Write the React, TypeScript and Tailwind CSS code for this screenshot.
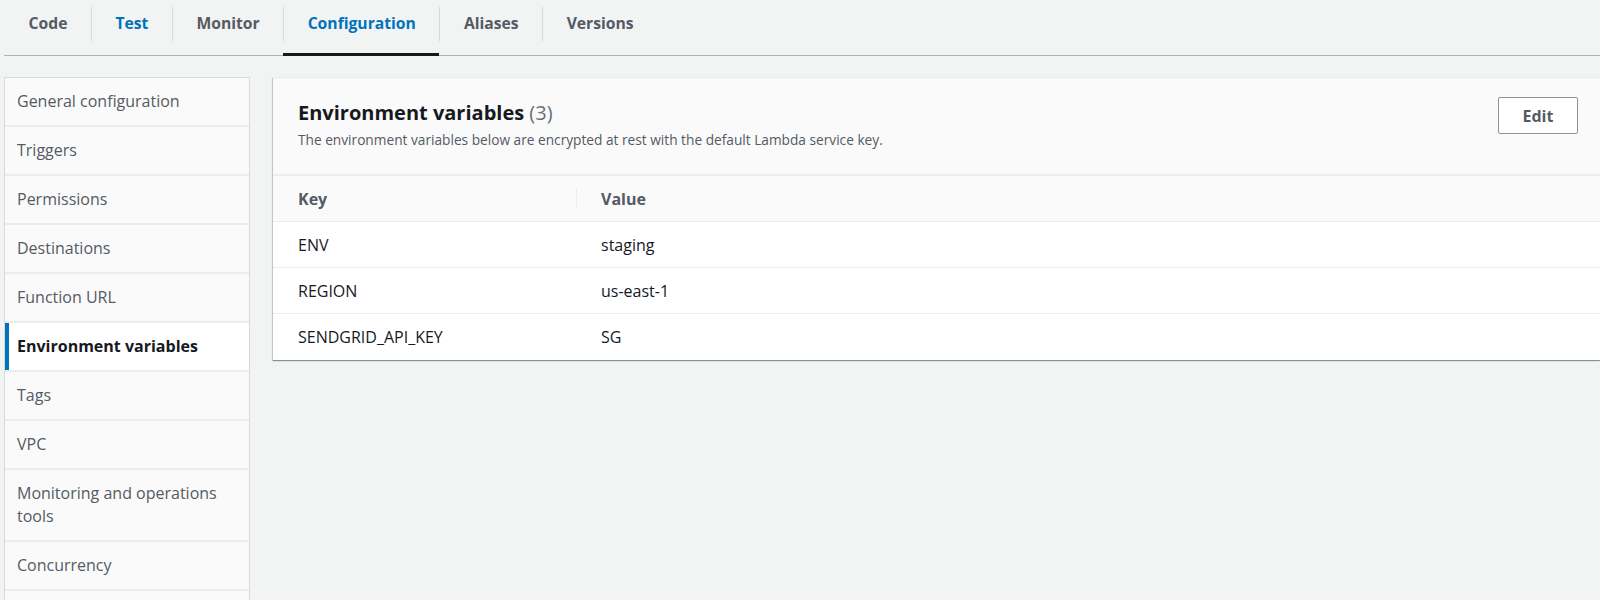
import React from 'react';

const font = { fontFamily: '"Open Sans", "Noto Sans", Arial, sans-serif' };

const tabs = [
  { label: 'Code', color: 'text-[#545b64]' },
  { label: 'Test', color: 'text-[#0073bb]' },
  { label: 'Monitor', color: 'text-[#545b64]' },
  { label: 'Configuration', color: 'text-[#0073bb]', active: true },
  { label: 'Aliases', color: 'text-[#545b64]' },
  { label: 'Versions', color: 'text-[#545b64]' },
];

const navItems = [
  'General configuration',
  'Triggers',
  'Permissions',
  'Destinations',
  'Function URL',
  'Environment variables',
  'Tags',
  'VPC',
  'Monitoring and operations tools',
  'Concurrency',
];

const envVars = [
  { key: 'ENV', value: 'staging' },
  { key: 'REGION', value: 'us-east-1' },
  { key: 'SENDGRID_API_KEY', value: 'SG' },
];

function Tabs() {
  return (
    <div className="flex border-b border-[#aab7b8] pl-[1px]">
      {tabs.map((t, i) => (
        <div key={t.label} className="-mb-px flex h-[56px] flex-col">
          <div
            className={`mt-[7px] flex h-[34px] items-center px-[23.5px] ${i > 0 ? 'border-l border-[#d5dbdb]' : ''}`}
          >
            <span className={`text-[15.7px] font-bold ${t.color}`}>{t.label}</span>
          </div>
          <div className="flex-1" />
          <div className={`h-[3px] ${t.active ? 'bg-[#16191f]' : 'bg-transparent'}`} />
        </div>
      ))}
    </div>
  );
}

function SideNav() {
  return (
    <div className="h-[560px] w-[246px] shrink-0 overflow-hidden border-x border-t border-[#d5dbdb] bg-[#fafafa]">
      {navItems.map((item) => {
        const active = item === 'Environment variables';
        return (
          <div
            key={item}
            className={`flex border-b-2 border-[#eaeded] ${active ? 'bg-white' : ''}`}
          >
            <div className={`w-[4px] shrink-0 ${active ? 'bg-[#0073bb]' : ''}`} />
            <div
              className={`py-[12px] pl-[8px] pr-[8px] text-[16px] leading-[23px] ${
                active ? 'font-bold text-[#16191f]' : 'text-[#545b64]'
              }`}
            >
              {item}
            </div>
          </div>
        );
      })}
      <div className="h-[47px]" />
    </div>
  );
}

function EnvCard() {
  return (
    <div className="flex-1 self-start border-t border-[#eaeded] bg-white shadow-[0_1px_1px_0_rgba(0,28,36,0.35),-1px_1px_1px_0_rgba(0,28,36,0.15)]">
      <div className="flex items-start justify-between border-b-2 border-[#eaeded] bg-[#fafafa] pb-[24px] pl-[25px] pr-[22px] pt-[21px]">
        <div>
          <h2 className="text-[20px] font-bold leading-[28px] text-[#16191f]">
            Environment variables <span className="font-normal text-[#687078]">(3)</span>
          </h2>
          <p className="mt-[3px] text-[13.7px] leading-[20px] text-[#545b64]">
            The environment variables below are encrypted at rest with the default Lambda service key.
          </p>
        </div>
        <button
          type="button"
          className="mt-[-2px] h-[37px] w-[80px] rounded-[2px] border border-[#879596] bg-white text-[16px] font-bold text-[#545b64]"
        >
          Edit
        </button>
      </div>
      <div className="flex h-[46px] items-center border-b border-[#eaeded] bg-[#fafafa]">
        <div className="w-[303px] shrink-0 pl-[25px] text-[16px] font-bold text-[#545b64]">Key</div>
        <div className="h-[21px] border-l border-[#eaeded]" />
        <div className="pl-[24px] text-[16px] font-bold text-[#545b64]">Value</div>
      </div>
      {envVars.map((v, i) => (
        <div
          key={v.key}
          className={`flex h-[46px] items-center ${i < envVars.length - 1 ? 'border-b border-[#eaeded]' : ''}`}
        >
          <div className="w-[303px] shrink-0 pl-[25px] text-[16px] text-[#16191f]">{v.key}</div>
          <div className="pl-[25px] text-[16px] text-[#16191f]">{v.value}</div>
        </div>
      ))}
    </div>
  );
}

export default function App() {
  return (
    <div className="h-[600px] w-[1600px] overflow-hidden bg-[#f2f3f3] pl-[4px]" style={font}>
      <Tabs />
      <div className="mt-[21px] flex gap-[23px]">
        <SideNav />
        <EnvCard />
      </div>
    </div>
  );
}
